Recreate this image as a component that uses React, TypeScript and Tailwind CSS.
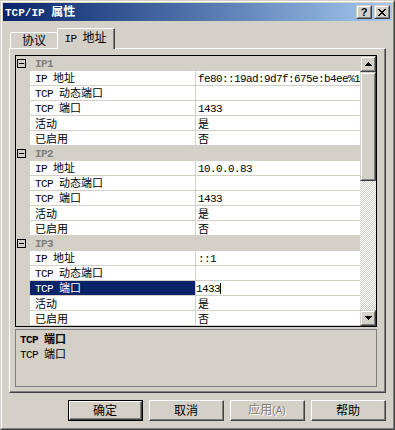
import type { ReactNode } from "react";

const MONO = "font-['Liberation_Mono',monospace] text-[11px] tracking-[-0.6px]";
const MONO_B = "font-['Liberation_Mono',monospace] text-[11px] tracking-[-0.6px] font-bold";
const HAN = "font-['Noto_Sans_CJK_SC',sans-serif] text-[11px]";
const HAN12 = "font-['Noto_Sans_CJK_SC',sans-serif] text-[12px]";

// splits ascii / han runs so each gets its own font and width
function T({ s, l = MONO, h = HAN }: { s: string; l?: string; h?: string }) {
  return (
    <>
      {s
        .split(/([\x20-\x7e]+)/)
        .filter(Boolean)
        .map((p, i) =>
          /^[\x20-\x7e]+$/.test(p) ? (
            <span key={i} className={l}>
              {p}
            </span>
          ) : (
            <span key={i} className={h}>
              {p}
            </span>
          )
        )}
    </>
  );
}

function Pix({ rows }: { rows: string[] }) {
  const w = rows[0].length;
  return (
    <svg width={w} height={rows.length} viewBox={`0 0 ${w} ${rows.length}`} shapeRendering="crispEdges">
      {rows.flatMap((r, y) =>
        [...r].map((c, x) =>
          c === "#" ? <rect key={`${x}-${y}`} x={x} y={y} width={1} height={1} fill="#000" /> : null
        )
      )}
    </svg>
  );
}

const CLOSE = ["##....##", ".##..##.", "..####..", "...##...", "..####..", ".##..##.", "##....##"];
const UP = ["...#...", "..###..", ".#####.", "#######"];
const DOWN = ["#######", ".#####.", "..###..", "...#..."];

function SmallBtn({ className, children }: { className: string; children?: ReactNode }) {
  return (
    <div className={`${className} bg-[#d4d0c8] border border-t-[#d4d0c8] border-l-[#d4d0c8] border-r-[#404040] border-b-[#404040]`}>
      <div className="h-full border border-t-white border-l-white border-r-[#808080] border-b-[#808080] flex items-center justify-center">
        {children}
      </div>
    </div>
  );
}

function Btn({ label, def, disabled }: { label: string; def?: boolean; disabled?: boolean }) {
  const face = (
    <div className="h-full border border-t-white border-l-white border-r-[#404040] border-b-[#404040]">
      <div
        className={
          disabled
            ? "h-full border-r border-b border-[#808080] flex items-center justify-center leading-[14px] whitespace-pre text-[#808080] [text-shadow:1px_1px_0_#fff]"
            : "h-full border-r border-b border-[#808080] flex items-center justify-center leading-[14px] whitespace-pre text-black"
        }
      >
        <span>
          <T s={label} l="font-['Liberation_Sans',sans-serif] text-[10px]" h={HAN12} />
        </span>
      </div>
    </div>
  );
  return def ? (
    <div className="w-[75px] h-[21px] border border-black">{face}</div>
  ) : (
    <div className="w-[75px] h-[21px]">{face}</div>
  );
}

const groups = [
  {
    name: "IP1",
    rows: [
      ["IP 地址", "fe80::19ad:9d7f:675e:b4ee%1"],
      ["TCP 动态端口", ""],
      ["TCP 端口", "1433"],
      ["活动", "是"],
      ["已启用", "否"],
    ],
  },
  {
    name: "IP2",
    rows: [
      ["IP 地址", "10.0.0.83"],
      ["TCP 动态端口", ""],
      ["TCP 端口", "1433"],
      ["活动", "是"],
      ["已启用", "否"],
    ],
  },
  {
    name: "IP3",
    rows: [
      ["IP 地址", "::1"],
      ["TCP 动态端口", ""],
      ["TCP 端口", "1433"],
      ["活动", "是"],
      ["已启用", "否"],
    ],
  },
];

function PropRow({ label, value, selected }: { label: string; value: string; selected: boolean }) {
  return (
    <div className="h-[15px] flex">
      <div className="w-[14px] bg-[#d4d0c8]" />
      <div
        className={
          selected
            ? "w-[165px] pl-[5px] flex items-center whitespace-pre leading-[14px] bg-[#0a246a] text-white border-b border-[#d4d0c8]"
            : "w-[165px] pl-[5px] flex items-center whitespace-pre leading-[14px] bg-white text-black border-b border-[#d4d0c8]"
        }
      >
        <span>
          <T s={label} />
        </span>
      </div>
      <div className="w-px bg-[#d4d0c8]" />
      <div
        className={
          selected
            ? "flex-1 flex items-center whitespace-pre leading-[14px] bg-white text-black border-b border-[#d4d0c8]"
            : "flex-1 pl-[2px] flex items-center whitespace-pre leading-[14px] bg-white text-black border-b border-[#d4d0c8]"
        }
      >
        <span>
          <T s={value} />
        </span>
        {selected && <span className="w-px h-[11px] bg-black" />}
      </div>
    </div>
  );
}

export default function App() {
  return (
    <div className="w-[395px] h-[430px] overflow-hidden select-none bg-[#d4d0c8] text-[11px] border border-t-[#d4d0c8] border-l-[#d4d0c8] border-r-[#404040] border-b-[#404040]">
      <div className="h-full p-px flex flex-col border border-t-white border-l-white border-r-[#808080] border-b-[#808080]">
        {/* Title bar */}
        <div className="h-[18px] shrink-0 flex items-center pl-[2px] pr-[2px] gap-[2px] bg-linear-to-r from-[#0a246a] to-[#a6caf0]">
          <div className="flex-1 text-white font-bold leading-[14px] whitespace-pre">
            <T s="TCP/IP 属性" l="font-['Liberation_Mono',monospace] text-[11px]" h={HAN12} />
          </div>
          <SmallBtn className="w-[16px] h-[14px]">
            <span className="font-['Liberation_Sans',sans-serif] text-[11px] font-bold leading-none text-black">?</span>
          </SmallBtn>
          <SmallBtn className="w-[16px] h-[14px]">
            <Pix rows={CLOSE} />
          </SmallBtn>
        </div>

        {/* Tabs */}
        <div className="mt-[7px] mx-[6px] h-[20px] shrink-0 flex items-end pl-px">
          <div className="w-[47px] h-[16px] rounded-tl-[2px] border-l border-t border-white flex items-center justify-center leading-[14px] text-black">
            <span>
              <T s="协议" h={HAN12} />
            </span>
          </div>
          <div className="relative z-10 -mb-px w-[58px] h-[21px] bg-[#d4d0c8] rounded-tl-[2px] border-l border-t border-r border-t-white border-l-white border-r-[#404040]">
            <div className="h-full border-r border-[#808080] flex items-center justify-center pb-[2px] leading-[14px] whitespace-pre text-black">
              <span>
                <T s="IP 地址" h={HAN12} />
              </span>
            </div>
          </div>
        </div>

        {/* Tab page */}
        <div className="mx-[6px] h-[345px] shrink-0 border border-t-white border-l-white border-r-[#404040] border-b-[#404040]">
          <div className="h-full pt-[6px] pl-[5px] border-r border-b border-[#808080]">
            {/* Property grid */}
            <div className="w-[362px] h-[272px] flex border border-black">
              <div className="w-[344px] flex flex-col">
                {groups.map((g, gi) => (
                  <div key={g.name} className="flex flex-col">
                    <div className="h-[15px] flex items-center bg-[#d4d0c8]">
                      <div className="ml-px w-[9px] h-[9px] border border-black flex items-center justify-center">
                        <div className="w-[5px] h-px bg-black" />
                      </div>
                      <div className="ml-[9px] font-bold text-[#808080] leading-[14px]">
                        <T s={g.name} l={MONO_B} />
                      </div>
                    </div>
                    {g.rows.map(([label, value], ri) => (
                      <PropRow key={label} label={label} value={value} selected={gi === 2 && ri === 2} />
                    ))}
                  </div>
                ))}
              </div>
              {/* Scrollbar */}
              <div className="w-[16px] flex flex-col">
                <SmallBtn className="w-[16px] h-[16px]">
                  <Pix rows={UP} />
                </SmallBtn>
                <div className="flex-1 flex flex-col bg-[repeating-conic-gradient(#d4d0c8_0%_25%,#ffffff_0%_50%)] [background-size:2px_2px]">
                  <SmallBtn className="w-[16px] h-[109px]" />
                </div>
                <SmallBtn className="w-[16px] h-[16px]">
                  <Pix rows={DOWN} />
                </SmallBtn>
              </div>
            </div>

            {/* Description */}
            <div className="mt-[2px] w-[362px] h-[58px] pl-[4px] pt-px border border-[#808080] text-black">
              <div className="h-[15px] leading-[15px] font-bold whitespace-pre">
                <T s="TCP 端口" l={MONO_B} />
              </div>
              <div className="h-[15px] leading-[15px] whitespace-pre">
                <T s="TCP 端口" />
              </div>
            </div>
          </div>
        </div>

        {/* Buttons */}
        <div className="mt-[7px] h-[21px] shrink-0 flex justify-end gap-[6px] pr-[6px]">
          <Btn label="确定" def />
          <Btn label="取消" />
          <Btn label="应用(A)" disabled />
          <Btn label="帮助" />
        </div>
      </div>
    </div>
  );
}
